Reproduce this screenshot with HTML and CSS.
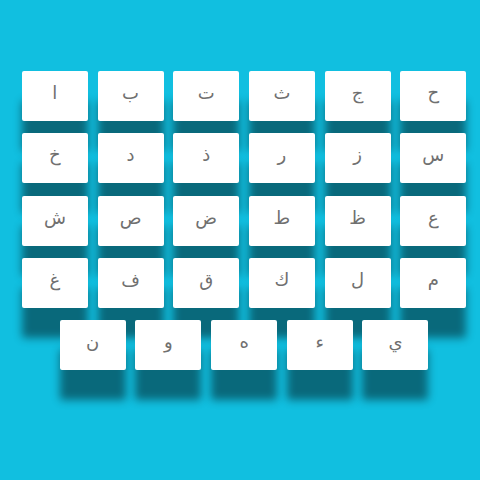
FILE: index.html
```html
<!DOCTYPE html>
<html lang="ar">
<head>
<meta charset="utf-8">
<link rel="stylesheet" href="styles.css">
</head>
<body>
<div class="board">
  <div class="tile">ا</div>
  <div class="tile">ب</div>
  <div class="tile">ت</div>
  <div class="tile">ث</div>
  <div class="tile">ج</div>
  <div class="tile">ح</div>
  <div class="tile">خ</div>
  <div class="tile">د</div>
  <div class="tile">ذ</div>
  <div class="tile">ر</div>
  <div class="tile">ز</div>
  <div class="tile">س</div>
  <div class="tile">ش</div>
  <div class="tile">ص</div>
  <div class="tile">ض</div>
  <div class="tile">ط</div>
  <div class="tile">ظ</div>
  <div class="tile">ع</div>
  <div class="tile">غ</div>
  <div class="tile">ف</div>
  <div class="tile">ق</div>
  <div class="tile">ك</div>
  <div class="tile">ل</div>
  <div class="tile">م</div>
  <div class="tile">ن</div>
  <div class="tile">و</div>
  <div class="tile">ه</div>
  <div class="tile">ء</div>
  <div class="tile">ي</div>
</div>
</body>
</html>
```
FILE: styles.css
```css
html, body {
  margin: 0;
  padding: 0;
  background: #11bfe0;
  height: 100%;
}
body {
  font-family: "DejaVu Sans", "Noto Sans", sans-serif;
}
.board {
  width: 445px;
  margin: 0 0 0 21.6px;
  padding-top: 71px;
  display: flex;
  flex-wrap: wrap;
  justify-content: center;
  column-gap: 9.7px;
  row-gap: 12.3px;
}
.tile {
  width: 66px;
  height: 50px;
  box-sizing: border-box;
  padding-bottom: 6px;
  background: #ffffff;
  border-radius: 2px;
  box-shadow: 0 30px 8px rgba(0, 0, 0, 0.45);
  display: flex;
  align-items: center;
  justify-content: center;
  font-size: 18px;
  line-height: 1;
  color: #707070;
}
```
